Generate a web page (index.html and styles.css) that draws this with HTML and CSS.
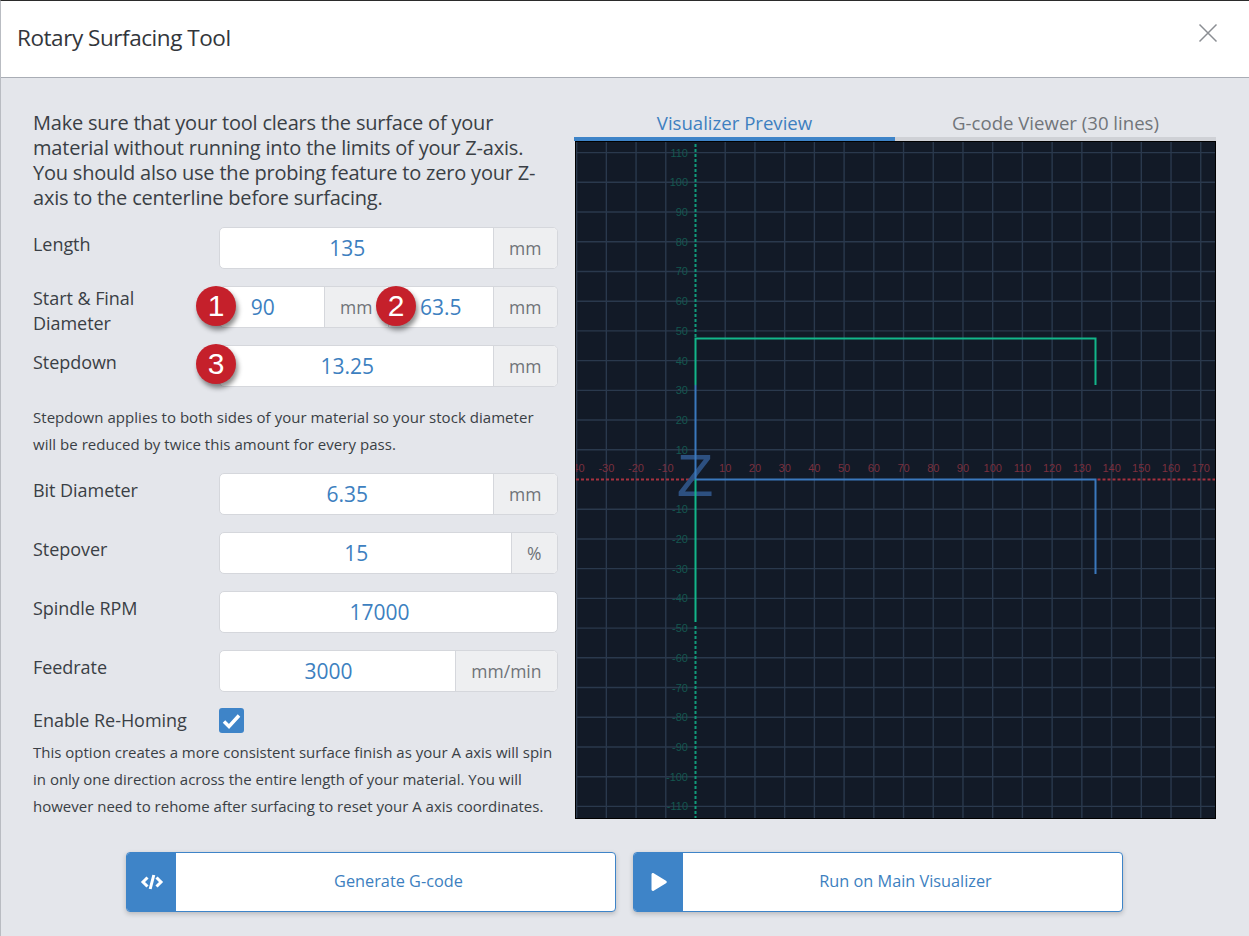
FILE: index.html
```html
<!DOCTYPE html>
<html lang="en">
<head>
<meta charset="utf-8">
<title>Rotary Surfacing Tool</title>
<link rel="stylesheet" href="styles.css">
</head>
<body>
<div class="modal">
  <header class="modal-head">
    <h1 class="modal-title">Rotary Surfacing Tool</h1>
    <svg class="close" viewBox="0 0 20 20" width="20" height="20"><path d="M1.500 1.500 18.500 18.500M18.500 1.500 1.500 18.500"/></svg>
  </header>
  <main class="modal-body">
    <div class="columns">
      <section class="form">
        <p class="intro">Make sure that your tool clears the surface of your material without running into the limits of your Z-axis. You should also use the probing feature to zero your Z-axis to the centerline before surfacing.</p>
        <div class="row">
          <span class="label">Length</span>
          <div class="group"><span class="value">135</span><span class="unit">mm</span></div>
        </div>
        <div class="row">
          <span class="label label-wrap">Start &amp; Final Diameter</span>
          <div class="pair">
            <span class="badge b-one">1</span>
            <div class="group half"><span class="value">90</span><span class="unit">mm</span></div>
            <span class="badge b-two">2</span>
            <div class="group half"><span class="value value-flush">63.5</span><span class="unit">mm</span></div>
          </div>
        </div>
        <div class="row">
          <span class="label">Stepdown</span>
          <div class="group"><span class="badge b-three">3</span><span class="value">13.25</span><span class="unit">mm</span></div>
        </div>
        <p class="help help-step">Stepdown applies to both sides of your material so your stock diameter will be reduced by twice this amount for every pass.</p>
        <div class="row">
          <span class="label">Bit Diameter</span>
          <div class="group"><span class="value">6.35</span><span class="unit">mm</span></div>
        </div>
        <div class="row">
          <span class="label">Stepover</span>
          <div class="group"><span class="value">15</span><span class="unit">%</span></div>
        </div>
        <div class="row">
          <span class="label">Spindle RPM</span>
          <div class="group"><span class="value">17000</span></div>
        </div>
        <div class="row row-last">
          <span class="label">Feedrate</span>
          <div class="group"><span class="value">3000</span><span class="unit">mm/min</span></div>
        </div>
        <div class="row row-check">
          <span class="label">Enable Re-Homing</span>
          <span class="check"><svg viewBox="0 0 25 25" width="25" height="25"><path d="M5 13.500 10 18.500 20 7.500"/></svg></span>
        </div>
        <p class="help help-home">This option creates a more consistent surface finish as your A axis will spin in only one direction across the entire length of your material. You will however need to rehome after surfacing to reset your A axis coordinates.</p>
      </section>
      <section class="preview">
        <div class="tabs">
          <span class="tab tab-on">Visualizer Preview</span>
          <span class="tab">G-code Viewer (30 lines)</span>
        </div>
        <div class="canvas" id="canvas"></div>
      </section>
    </div>
    <div class="actions">
      <button class="action"><span class="action-icon"><svg viewBox="0 0 24 20" width="24" height="20"><path class="code" d="M7.500 5.500 3 10 7.500 14.500M16.500 5.500 21 10 16.500 14.500M13.800 3 10.200 17"/></svg></span><span class="action-text">Generate G-code</span></button>
      <button class="action"><span class="action-icon"><svg viewBox="0 0 18 20" width="18" height="20"><path class="play" d="M1.500 2.500C1.500 1.300 2.700.7 3.700 1.300L16 8.700C17 9.300 17 10.700 16 11.300L3.700 18.700C2.700 19.300 1.500 18.700 1.500 17.500Z"/></svg></span><span class="action-text">Run on Main Visualizer</span></button>
    </div>
  </main>
</div>
<script src="grid.js"></script>
</body>
</html>
```
FILE: grid.js
```js
const W = 639, H = 676, X0 = 119.5, Y0 = 337.5, S = 29.72, XR = 519.5;
const parts = [];
for (let i = -4; i <= 17; i++) {
  const x = X0 + i * S;
  if (i !== 0) parts.push(`<line class="grid" x1="${x}" y1="0" x2="${x}" y2="${H}"/>`);
}
for (let i = -11; i <= 11; i++) {
  const y = Y0 + i * S;
  if (i !== 0) parts.push(`<line class="grid" x1="0" y1="${y}" x2="${W}" y2="${y}"/>`);
}
for (let i = -4; i <= 17; i++) {
  if (i === 0) continue;
  parts.push(`<text class="tx" x="${X0 + i * S}" y="${Y0 - 7.5}" text-anchor="middle">${i * 10}</text>`);
}
for (let i = -11; i <= 11; i++) {
  if (i === 0) continue;
  parts.push(`<text class="ty" x="${X0 - 7.5}" y="${Y0 + i * S + 4}" text-anchor="end">${-i * 10}</text>`);
}
parts.push(`<line class="dot-red" x1="0" y1="${Y0}" x2="${X0}" y2="${Y0}"/>`);
parts.push(`<line class="dot-red" x1="${XR + 2}" y1="${Y0}" x2="${W}" y2="${Y0}"/>`);
parts.push(`<line class="dot-green" x1="${X0}" y1="2" x2="${X0}" y2="196"/>`);
parts.push(`<line class="dot-green" x1="${X0}" y1="484" x2="${X0}" y2="${H}"/>`);
parts.push(`<text class="zed" x="${X0 - 0.5}" y="354" text-anchor="middle">Z</text>`);
parts.push(`<path class="path-blue" d="M${X0} 243V${Y0}H${XR}V432"/>`);
parts.push(`<path class="path-green" d="M${X0} 480V${Y0}"/>`);
parts.push(`<path class="path-green" d="M${X0} 243V196.500H${XR}V243"/>`);
document.getElementById('canvas').innerHTML =
  `<svg viewBox="0 0 ${W} ${H}" width="${W}" height="${H}">${parts.join('')}</svg>`;
```
FILE: styles.css
```css
* { box-sizing: border-box; }
html, body { margin: 0; height: 100%; }
body { background: #e4e6eb; font-family: "Open Sans", "Noto Sans", sans-serif; color: #3a3f45; overflow: hidden; }
.modal { height: 936px; border-top: 1px solid #2b2b2b; border-left: 1px solid #b9bcc2; display: flex; flex-direction: column; }
.modal-head { height: 77px; flex: none; background: #fff; border-bottom: 1px solid #a9adb5; display: flex; align-items: center; justify-content: space-between; padding: 0 31px 4px 16px; }
.modal-title { margin: 0; font-size: 22.500px; font-weight: 400; color: #33363b; letter-spacing: -.45px; }
.close { margin-bottom: 8px; }
.close path { stroke: #8b8e93; stroke-width: 1.500; fill: none; }
.modal-body { flex: 1; padding: 32px 32px 0 32px; }
.columns { display: flex; gap: 16px; }
.form { width: 525px; flex: none; }
.intro { margin: 0 0 17px; font-size: 20px; line-height: 25px; color: #3a3f45; letter-spacing: -.2px; }
.row { display: flex; align-items: flex-start; margin-bottom: 17px; min-height: 42px; }
.row-last { margin-bottom: 13px; }
.label { width: 186px; flex: none; font-size: 18px; line-height: 25px; color: #3a3f45; padding-top: 5px; letter-spacing: -.05px; }
.label-wrap { padding: 0 50px 0 0; margin-bottom: -8px; }
.group { flex: 1; height: 42px; display: flex; background: #fff; border: 1px solid #d5d7dc; border-radius: 5px; position: relative; }
.pair { flex: 1; display: flex; position: relative; }
.half { flex: 1; }
.half:first-of-type { border-radius: 5px 0 0 5px; }
.half + .badge + .half { border-radius: 0 5px 5px 0; border-left: none; }
.value { flex: 1; display: flex; align-items: center; justify-content: center; padding-right: 18px; color: #3d7fc0; font-size: 21px; }
.value-flush { padding-right: 0; }
.unit { padding: 0 15.500px; display: flex; align-items: center; background: #eeeff1; border-left: 1px solid #d5d7dc; border-radius: 0 4px 4px 0; color: #6f7378; font-size: 17.500px; }
.badge { position: absolute; width: 40px; height: 40px; border-radius: 50%; background: #c5202b; color: #fff; font-size: 30px; display: flex; align-items: center; justify-content: center; font-family: "Liberation Sans", sans-serif; box-shadow: 2px 4px 5px rgba(0,0,0,.45); z-index: 2; }
.b-one { left: -23px; top: 0; }
.b-two { left: 157px; top: 0; }
.b-three { left: -24px; top: -2px; }
.help { margin: 0; font-size: 15px; line-height: 27px; color: #3a3f45; }
.help-step { margin: 0 0 15px; padding-right: 20px; letter-spacing: .04px; }
.row-check { margin-bottom: 0; min-height: 30px; align-items: center; }
.row-check .label { padding-top: 0; }
.check { width: 25px; height: 25px; background: #3e84c8; border-radius: 3px; display: block; }
.check svg { display: block; }
.check path { fill: none; stroke: #fff; stroke-width: 3.500; }
.help-home { margin-top: 4px; }
.preview { width: 642px; flex: none; }
.tabs { display: flex; height: 31px; }
.tab { flex: 1; text-align: center; font-size: 18.600px; line-height: 25px; color: #71757a; border-bottom: 4px solid #cfd1d6; }
.tab-on { color: #3d7fc0; border-bottom-color: #3e84c8; flex: 0 0 321px; }
.canvas { width: 641px; height: 678px; margin-left: 1px; background: #121a27; border: 1px solid #000; }
.canvas svg { display: block; }
.grid { stroke: #2a394d; stroke-width: 1.400; }
.tx { fill: #7a2f3e; font: 11px "Liberation Sans", sans-serif; }
.ty { fill: #14574f; font: 11px "Liberation Sans", sans-serif; }
.dot-red { stroke: #a5313f; stroke-width: 2; stroke-dasharray: 3 2; }
.dot-green { stroke: #119a7a; stroke-width: 2; stroke-dasharray: 3 2; }
.zed { fill: #2d5080; font: 60px "Liberation Sans", sans-serif; }
.path-blue { fill: none; stroke: #3a78bd; stroke-width: 2; }
.path-green { fill: none; stroke: #12b68a; stroke-width: 2; }
.actions { display: flex; gap: 17px; padding: 32px 0 0 93px; }
.action { width: 490px; height: 60px; padding: 0; display: flex; background: #fff; border: 1px solid #3e84c8; border-radius: 4px; box-shadow: 0 2px 5px rgba(0,0,0,.2); font-family: inherit; overflow: hidden; }
.action-icon { width: 49px; flex: none; background: #3e84c8; display: flex; align-items: center; justify-content: center; }
.action-text { flex: 1; align-self: center; text-align: center; font-size: 16.300px; color: #3d7fc0; padding: 0 0 2px 6px; }
.code { fill: none; stroke: #fff; stroke-width: 3; }
.play { fill: #fff; }
```
